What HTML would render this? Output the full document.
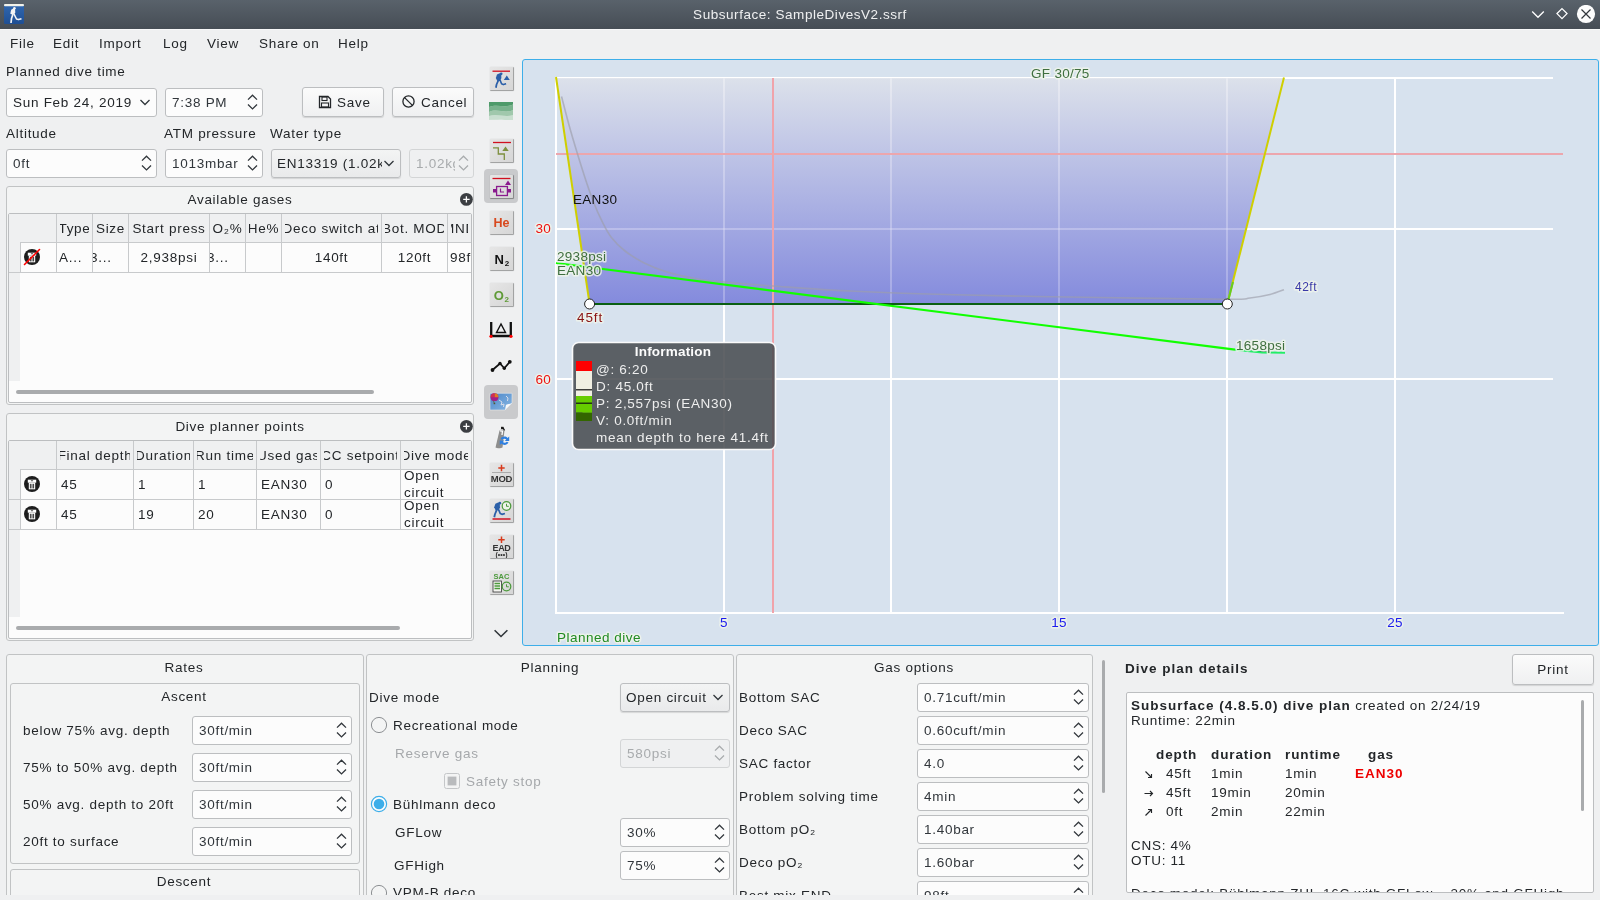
<!DOCTYPE html><html><head><meta charset="utf-8"><style>
html,body{-webkit-font-smoothing:antialiased;margin:0;padding:0;width:1600px;height:900px;overflow:hidden;background:#eff0f1;font-family:"Liberation Sans", sans-serif;}
</style></head><body><div style="position:absolute;left:0;top:0;width:1600px;height:900px;will-change:transform;">
<div style="position:absolute;left:0px;top:0px;width:1600px;height:29px;background:linear-gradient(#59626b,#464d55);"></div>
<div style="position:absolute;left:0px;top:29px;width:1600px;height:1px;background:#f7f8f8;"></div>
<svg style="position:absolute;left:4px;top:4px;" width="20" height="20" viewBox="0 0 20 20"><defs><linearGradient id="ic" x1="0" y1="0" x2="0" y2="1"><stop offset="0" stop-color="#3168b0"/><stop offset="1" stop-color="#1f4f94"/></linearGradient></defs><rect x="0" y="0" width="20" height="20" rx="1.5" fill="url(#ic)"/><rect x="0" y="0" width="20" height="2.2" rx="1" fill="#f2f2ea"/><path d="M6.3 9.5 L7.2 5.8 L9.5 4.2 L11 4.6 L11.3 8.5 L10.2 10.5 L7 10.3 Z" fill="#f4f4f4"/><circle cx="10.4" cy="4.3" r="1.3" fill="#f4f4f4"/><path d="M9 10 L7.5 14.5 L7 19" stroke="#f4f4f4" stroke-width="1.7" fill="none" stroke-linejoin="round"/><path d="M10 10 L12.5 15 L14.5 15.6 L17.5 14.8" stroke="#f4f4f4" stroke-width="1.6" fill="none" stroke-linejoin="round"/></svg>
<div style="position:absolute;left:300px;width:1000px;text-align:center;top:7.32px;line-height:16.20px;font-size:13.5px;color:#eff0f1;font-weight:normal;letter-spacing:0.55px;white-space:nowrap;">Subsurface: SampleDivesV2.ssrf</div>
<svg style="position:absolute;left:1529px;top:5px;" width="18" height="18" viewBox="0 0 18 18"><path d="M3.2 6.5 L9 12.3 L14.8 6.5" fill="none" stroke="#fff" stroke-width="1.3"/></svg>
<svg style="position:absolute;left:1553px;top:5px;" width="18" height="18" viewBox="0 0 18 18"><path d="M9 3.6 L14 8.6 L9 13.6 L4 8.6 Z" fill="none" stroke="#fff" stroke-width="1.3"/></svg>
<svg style="position:absolute;left:1576px;top:5px;" width="20" height="20" viewBox="0 0 20 20"><circle cx="10" cy="9" r="9.1" fill="#fcfcfc"/><path d="M5.5 4.5 L14.5 13.5 M14.5 4.5 L5.5 13.5" stroke="#31363b" stroke-width="1.2"/></svg>
<div style="position:absolute;left:10px;top:36.02px;line-height:16.20px;font-size:13.5px;color:#232629;font-weight:normal;letter-spacing:0.72px;white-space:nowrap;">File</div>
<div style="position:absolute;left:53px;top:36.02px;line-height:16.20px;font-size:13.5px;color:#232629;font-weight:normal;letter-spacing:0.72px;white-space:nowrap;">Edit</div>
<div style="position:absolute;left:99px;top:36.02px;line-height:16.20px;font-size:13.5px;color:#232629;font-weight:normal;letter-spacing:0.72px;white-space:nowrap;">Import</div>
<div style="position:absolute;left:163px;top:36.02px;line-height:16.20px;font-size:13.5px;color:#232629;font-weight:normal;letter-spacing:0.72px;white-space:nowrap;">Log</div>
<div style="position:absolute;left:207px;top:36.02px;line-height:16.20px;font-size:13.5px;color:#232629;font-weight:normal;letter-spacing:0.72px;white-space:nowrap;">View</div>
<div style="position:absolute;left:259px;top:36.02px;line-height:16.20px;font-size:13.5px;color:#232629;font-weight:normal;letter-spacing:0.72px;white-space:nowrap;">Share on</div>
<div style="position:absolute;left:338px;top:36.02px;line-height:16.20px;font-size:13.5px;color:#232629;font-weight:normal;letter-spacing:0.72px;white-space:nowrap;">Help</div>
<div style="position:absolute;left:6px;top:64.02px;line-height:16.20px;font-size:13.5px;color:#232629;font-weight:normal;letter-spacing:0.72px;white-space:nowrap;">Planned dive time</div>
<div style="position:absolute;left:6px;top:88px;width:151px;height:29px;box-sizing:border-box;border:1px solid #bcbec0;border-radius:3px;background:#fcfcfc;"></div>
<svg style="position:absolute;left:139px;top:97px;" width="12" height="10" viewBox="0 0 12 10"><path d="M1.5 3 L6 7.5 L10.5 3" fill="none" stroke="#31363b" stroke-width="1.3"/></svg>
<div style="position:absolute;left:6px;top:88px;width:132px;height:29px;overflow:hidden;">
<div style="position:absolute;left:7px;top:7.32px;line-height:16.20px;font-size:13.5px;color:#232629;font-weight:normal;letter-spacing:0.72px;white-space:nowrap;">Sun Feb 24, 2019</div>
</div>
<div style="position:absolute;left:165px;top:88px;width:98px;height:29px;box-sizing:border-box;border:1px solid #bcbec0;border-radius:3px;background:#fcfcfc;"></div>
<svg style="position:absolute;left:247px;top:93px;" width="11" height="18" viewBox="0 0 11 18"><path d="M1 6.6 L5.5 2.2 L10 6.6 M1 11.5 L5.5 15.9 L10 11.5" fill="none" stroke="#31363b" stroke-width="1.3"/></svg>
<div style="position:absolute;left:172px;top:95.32px;line-height:16.20px;font-size:13.5px;color:#31363b;font-weight:normal;letter-spacing:0.72px;white-space:nowrap;">7:38 PM</div>
<div style="position:absolute;left:302px;top:87px;width:82px;height:30px;box-sizing:border-box;border:1px solid #bcbec0;border-radius:3px;background:linear-gradient(#fbfbfb,#eff0f1);box-shadow:0 1px 1px rgba(0,0,0,0.12);"></div>
<svg style="position:absolute;left:318px;top:95px;" width="14" height="14" viewBox="0 0 14 14"><path d="M1.5 1.5 H10 L12.5 4 V12.5 H1.5 Z" fill="none" stroke="#232629" stroke-width="1.3"/><rect x="4" y="2" width="5" height="3.5" fill="none" stroke="#232629" stroke-width="1.1"/><rect x="3.5" y="8" width="7" height="4" fill="none" stroke="#232629" stroke-width="1.1"/></svg>
<div style="position:absolute;left:337px;top:95.02px;line-height:16.20px;font-size:13.5px;color:#232629;font-weight:normal;letter-spacing:0.72px;white-space:nowrap;">Save</div>
<div style="position:absolute;left:392px;top:87px;width:82px;height:30px;box-sizing:border-box;border:1px solid #bcbec0;border-radius:3px;background:linear-gradient(#fbfbfb,#eff0f1);box-shadow:0 1px 1px rgba(0,0,0,0.12);"></div>
<svg style="position:absolute;left:401px;top:94px;" width="15" height="15" viewBox="0 0 15 15"><circle cx="7.5" cy="7.5" r="5.6" fill="none" stroke="#232629" stroke-width="1.3"/><path d="M3.6 3.6 L11.4 11.4" stroke="#232629" stroke-width="1.3"/></svg>
<div style="position:absolute;left:421px;top:95.02px;line-height:16.20px;font-size:13.5px;color:#232629;font-weight:normal;letter-spacing:0.72px;white-space:nowrap;">Cancel</div>
<div style="position:absolute;left:6px;top:126.02px;line-height:16.20px;font-size:13.5px;color:#232629;font-weight:normal;letter-spacing:0.72px;white-space:nowrap;">Altitude</div>
<div style="position:absolute;left:164px;top:126.02px;line-height:16.20px;font-size:13.5px;color:#232629;font-weight:normal;letter-spacing:0.72px;white-space:nowrap;">ATM pressure</div>
<div style="position:absolute;left:270px;top:126.02px;line-height:16.20px;font-size:13.5px;color:#232629;font-weight:normal;letter-spacing:0.72px;white-space:nowrap;">Water type</div>
<div style="position:absolute;left:6px;top:149px;width:151px;height:29px;box-sizing:border-box;border:1px solid #bcbec0;border-radius:3px;background:#fcfcfc;"></div>
<svg style="position:absolute;left:141px;top:154px;" width="11" height="18" viewBox="0 0 11 18"><path d="M1 6.6 L5.5 2.2 L10 6.6 M1 11.5 L5.5 15.9 L10 11.5" fill="none" stroke="#31363b" stroke-width="1.3"/></svg>
<div style="position:absolute;left:13px;top:156.32px;line-height:16.20px;font-size:13.5px;color:#31363b;font-weight:normal;letter-spacing:0.72px;white-space:nowrap;">0ft</div>
<div style="position:absolute;left:165px;top:149px;width:98px;height:29px;box-sizing:border-box;border:1px solid #bcbec0;border-radius:3px;background:#fcfcfc;"></div>
<svg style="position:absolute;left:247px;top:154px;" width="11" height="18" viewBox="0 0 11 18"><path d="M1 6.6 L5.5 2.2 L10 6.6 M1 11.5 L5.5 15.9 L10 11.5" fill="none" stroke="#31363b" stroke-width="1.3"/></svg>
<div style="position:absolute;left:172px;top:156.32px;line-height:16.20px;font-size:13.5px;color:#31363b;font-weight:normal;letter-spacing:0.72px;white-space:nowrap;">1013mbar</div>
<div style="position:absolute;left:271px;top:149px;width:130px;height:29px;box-sizing:border-box;border:1px solid #bcbec0;border-radius:3px;background:linear-gradient(#f3f4f4,#e9eaeb);box-shadow:0 1px 1px rgba(0,0,0,0.12);"></div>
<svg style="position:absolute;left:383px;top:158px;" width="12" height="10" viewBox="0 0 12 10"><path d="M1.5 3 L6 7.5 L10.5 3" fill="none" stroke="#31363b" stroke-width="1.3"/></svg>
<div style="position:absolute;left:271px;top:149px;width:111px;height:29px;overflow:hidden;">
<div style="position:absolute;left:6px;top:7.32px;line-height:16.20px;font-size:13.5px;color:#232629;font-weight:normal;letter-spacing:0.72px;white-space:nowrap;">EN13319 (1.02k</div>
</div>
<div style="position:absolute;left:409px;top:149px;width:65px;height:29px;box-sizing:border-box;border:1px solid #d3d5d6;border-radius:3px;background:#eff0f1;"></div>
<svg style="position:absolute;left:458px;top:154px;" width="11" height="18" viewBox="0 0 11 18"><path d="M1 6.6 L5.5 2.2 L10 6.6 M1 11.5 L5.5 15.9 L10 11.5" fill="none" stroke="#a8abad" stroke-width="1.3"/></svg>
<div style="position:absolute;left:416px;top:155px;width:39px;height:18px;overflow:hidden;"><div style="position:absolute;left:0;top:0.5px;line-height:16.2px;font-size:13.5px;color:#a8abad;letter-spacing:0.72px;white-space:nowrap">1.02kg/l</div></div>
<div style="position:absolute;left:6px;top:186px;width:468px;height:219px;box-sizing:border-box;border:1px solid #c1c3c4;border-radius:3px;background:#f3f4f4;"></div>
<div style="position:absolute;left:-260px;width:1000px;text-align:center;top:192.02px;line-height:16.20px;font-size:13.5px;color:#232629;font-weight:normal;letter-spacing:0.72px;white-space:nowrap;">Available gases</div>
<svg style="position:absolute;left:459px;top:192px;" width="15" height="15" viewBox="0 0 15 15"><circle cx="7.4" cy="7.4" r="6.4" fill="#3b3e42"/><path d="M7.4 4.2 V10.6 M4.2 7.4 H10.6" stroke="#fff" stroke-width="1.3"/></svg>
<div style="position:absolute;left:8px;top:213px;width:464px;height:190px;box-sizing:border-box;border:1px solid #bcbec0;border-radius:2px;background:#fcfcfc;"></div>
<div style="position:absolute;left:9px;top:214px;width:11px;height:167px;background:#eff0f1;"></div>
<div style="position:absolute;left:9px;top:214px;width:462px;height:28px;background:#eff0f1;"></div>
<div style="position:absolute;left:20px;top:242px;width:451px;height:1px;background:#c8cacc;"></div>
<div style="position:absolute;left:56px;top:214px;width:1px;height:28px;background:#c8cacc;"></div>
<div style="position:absolute;left:92px;top:214px;width:1px;height:28px;background:#c8cacc;"></div>
<div style="position:absolute;left:128px;top:214px;width:1px;height:28px;background:#c8cacc;"></div>
<div style="position:absolute;left:209px;top:214px;width:1px;height:28px;background:#c8cacc;"></div>
<div style="position:absolute;left:245px;top:214px;width:1px;height:28px;background:#c8cacc;"></div>
<div style="position:absolute;left:281px;top:214px;width:1px;height:28px;background:#c8cacc;"></div>
<div style="position:absolute;left:381px;top:214px;width:1px;height:28px;background:#c8cacc;"></div>
<div style="position:absolute;left:447px;top:214px;width:1px;height:28px;background:#c8cacc;"></div>
<div style="position:absolute;left:9px;top:272px;width:462px;height:1px;background:#c8cacc;"></div>
<div style="position:absolute;left:20px;top:242px;width:1px;height:30px;background:#c8cacc;"></div>
<div style="position:absolute;left:56px;top:242px;width:1px;height:30px;background:#c8cacc;"></div>
<div style="position:absolute;left:92px;top:242px;width:1px;height:30px;background:#c8cacc;"></div>
<div style="position:absolute;left:128px;top:242px;width:1px;height:30px;background:#c8cacc;"></div>
<div style="position:absolute;left:209px;top:242px;width:1px;height:30px;background:#c8cacc;"></div>
<div style="position:absolute;left:245px;top:242px;width:1px;height:30px;background:#c8cacc;"></div>
<div style="position:absolute;left:281px;top:242px;width:1px;height:30px;background:#c8cacc;"></div>
<div style="position:absolute;left:381px;top:242px;width:1px;height:30px;background:#c8cacc;"></div>
<div style="position:absolute;left:447px;top:242px;width:1px;height:30px;background:#c8cacc;"></div>
<div style="position:absolute;left:20px;top:243px;width:1px;height:30px;background:#c8cacc;"></div>
<svg style="position:absolute;left:23px;top:248px;" width="18" height="18" viewBox="0 0 18 18"><circle cx="9" cy="9" r="8" fill="#1d1d1d"/><rect x="4.8" y="4.7" width="8.4" height="3" fill="#fff"/><rect x="7.9" y="5.4" width="2.2" height="0.8" fill="#1d1d1d"/><rect x="5.8" y="7.7" width="6.4" height="6.6" fill="#fff"/><path d="M7.4 8.8 V13.4 M9 8.8 V13.4 M10.6 8.8 V13.4" stroke="#1d1d1d" stroke-width="0.9"/><path d="M1.5 16.5 L16.5 1.5" stroke="#ff0000" stroke-width="1.6" stroke-linecap="round"/></svg>
<div style="position:absolute;left:57px;top:243px;width:35px;height:29px;overflow:hidden;"><div style="position:absolute;left:2px;top:6.5px;line-height:16.2px;font-size:13.5px;color:#232629;letter-spacing:0.72px;white-space:nowrap">A...</div></div>
<div style="position:absolute;left:93px;top:243px;width:35px;height:29px;overflow:hidden;"><div style="position:absolute;left:-3px;top:6.5px;line-height:16.2px;font-size:13.5px;color:#232629;letter-spacing:0.72px;white-space:nowrap">3...</div></div>
<div style="position:absolute;left:129px;top:243px;width:80px;height:29px;overflow:hidden;"><div style="position:absolute;left:-200px;right:-200px;text-align:center;top:6.5px;line-height:16.2px;font-size:13.5px;color:#232629;letter-spacing:0.72px;white-space:nowrap">2,938psi</div></div>
<div style="position:absolute;left:210px;top:243px;width:35px;height:29px;overflow:hidden;"><div style="position:absolute;left:-3px;top:6.5px;line-height:16.2px;font-size:13.5px;color:#232629;letter-spacing:0.72px;white-space:nowrap">3...</div></div>
<div style="position:absolute;left:246px;top:243px;width:35px;height:29px;overflow:hidden;"><div style="position:absolute;left:-200px;right:-200px;text-align:center;top:6.5px;line-height:16.2px;font-size:13.5px;color:#232629;letter-spacing:0.72px;white-space:nowrap"></div></div>
<div style="position:absolute;left:282px;top:243px;width:99px;height:29px;overflow:hidden;"><div style="position:absolute;left:-200px;right:-200px;text-align:center;top:6.5px;line-height:16.2px;font-size:13.5px;color:#232629;letter-spacing:0.72px;white-space:nowrap">140ft</div></div>
<div style="position:absolute;left:382px;top:243px;width:65px;height:29px;overflow:hidden;"><div style="position:absolute;left:-200px;right:-200px;text-align:center;top:6.5px;line-height:16.2px;font-size:13.5px;color:#232629;letter-spacing:0.72px;white-space:nowrap">120ft</div></div>
<div style="position:absolute;left:448px;top:243px;width:23px;height:29px;overflow:hidden;"><div style="position:absolute;left:2px;top:6.5px;line-height:16.2px;font-size:13.5px;color:#232629;letter-spacing:0.72px;white-space:nowrap">98ft</div></div>
<div style="position:absolute;left:24px;top:214px;width:29px;height:28px;overflow:hidden;"><div style="position:absolute;left:-200px;right:-200px;text-align:center;top:6.8px;line-height:16.2px;font-size:13.5px;color:#232629;letter-spacing:0.72px;white-space:nowrap"></div></div>
<div style="position:absolute;left:60px;top:214px;width:29px;height:28px;overflow:hidden;"><div style="position:absolute;left:-200px;right:-200px;text-align:center;top:6.8px;line-height:16.2px;font-size:13.5px;color:#232629;letter-spacing:0.72px;white-space:nowrap">Type</div></div>
<div style="position:absolute;left:96px;top:214px;width:29px;height:28px;overflow:hidden;"><div style="position:absolute;left:-200px;right:-200px;text-align:center;top:6.8px;line-height:16.2px;font-size:13.5px;color:#232629;letter-spacing:0.72px;white-space:nowrap">Size</div></div>
<div style="position:absolute;left:132px;top:214px;width:74px;height:28px;overflow:hidden;"><div style="position:absolute;left:-200px;right:-200px;text-align:center;top:6.8px;line-height:16.2px;font-size:13.5px;color:#232629;letter-spacing:0.72px;white-space:nowrap">Start press</div></div>
<div style="position:absolute;left:213px;top:214px;width:29px;height:28px;overflow:hidden;"><div style="position:absolute;left:-200px;right:-200px;text-align:center;top:6.8px;line-height:16.2px;font-size:13.5px;color:#232629;letter-spacing:0.72px;white-space:nowrap">O₂%</div></div>
<div style="position:absolute;left:249px;top:214px;width:29px;height:28px;overflow:hidden;"><div style="position:absolute;left:-200px;right:-200px;text-align:center;top:6.8px;line-height:16.2px;font-size:13.5px;color:#232629;letter-spacing:0.72px;white-space:nowrap">He%</div></div>
<div style="position:absolute;left:285px;top:214px;width:93px;height:28px;overflow:hidden;"><div style="position:absolute;left:-200px;right:-200px;text-align:center;top:6.8px;line-height:16.2px;font-size:13.5px;color:#232629;letter-spacing:0.72px;white-space:nowrap">Deco switch at</div></div>
<div style="position:absolute;left:385px;top:214px;width:59px;height:28px;overflow:hidden;"><div style="position:absolute;left:-200px;right:-200px;text-align:center;top:6.8px;line-height:16.2px;font-size:13.5px;color:#232629;letter-spacing:0.72px;white-space:nowrap">Bot. MOD</div></div>
<div style="position:absolute;left:451px;top:214px;width:17px;height:28px;overflow:hidden;"><div style="position:absolute;left:-200px;right:-200px;text-align:center;top:6.8px;line-height:16.2px;font-size:13.5px;color:#232629;letter-spacing:0.72px;white-space:nowrap">MND</div></div>
<div style="position:absolute;left:16px;top:389.5px;width:358px;height:4px;background:#a9abad;border-radius:2px;"></div>
<div style="position:absolute;left:6px;top:413px;width:468px;height:228px;box-sizing:border-box;border:1px solid #c1c3c4;border-radius:3px;background:#f3f4f4;"></div>
<div style="position:absolute;left:-260px;width:1000px;text-align:center;top:419.02px;line-height:16.20px;font-size:13.5px;color:#232629;font-weight:normal;letter-spacing:0.72px;white-space:nowrap;">Dive planner points</div>
<svg style="position:absolute;left:459px;top:419px;" width="15" height="15" viewBox="0 0 15 15"><circle cx="7.4" cy="7.4" r="6.4" fill="#3b3e42"/><path d="M7.4 4.2 V10.6 M4.2 7.4 H10.6" stroke="#fff" stroke-width="1.3"/></svg>
<div style="position:absolute;left:8px;top:440px;width:464px;height:199px;box-sizing:border-box;border:1px solid #bcbec0;border-radius:2px;background:#fcfcfc;"></div>
<div style="position:absolute;left:9px;top:441px;width:11px;height:176px;background:#eff0f1;"></div>
<div style="position:absolute;left:9px;top:441px;width:462px;height:28px;background:#eff0f1;"></div>
<div style="position:absolute;left:20px;top:469px;width:451px;height:1px;background:#c8cacc;"></div>
<div style="position:absolute;left:56px;top:441px;width:1px;height:28px;background:#c8cacc;"></div>
<div style="position:absolute;left:133px;top:441px;width:1px;height:28px;background:#c8cacc;"></div>
<div style="position:absolute;left:193px;top:441px;width:1px;height:28px;background:#c8cacc;"></div>
<div style="position:absolute;left:256px;top:441px;width:1px;height:28px;background:#c8cacc;"></div>
<div style="position:absolute;left:320px;top:441px;width:1px;height:28px;background:#c8cacc;"></div>
<div style="position:absolute;left:400px;top:441px;width:1px;height:28px;background:#c8cacc;"></div>
<div style="position:absolute;left:9px;top:499px;width:462px;height:1px;background:#c8cacc;"></div>
<div style="position:absolute;left:20px;top:469px;width:1px;height:30px;background:#c8cacc;"></div>
<div style="position:absolute;left:56px;top:469px;width:1px;height:30px;background:#c8cacc;"></div>
<div style="position:absolute;left:133px;top:469px;width:1px;height:30px;background:#c8cacc;"></div>
<div style="position:absolute;left:193px;top:469px;width:1px;height:30px;background:#c8cacc;"></div>
<div style="position:absolute;left:256px;top:469px;width:1px;height:30px;background:#c8cacc;"></div>
<div style="position:absolute;left:320px;top:469px;width:1px;height:30px;background:#c8cacc;"></div>
<div style="position:absolute;left:400px;top:469px;width:1px;height:30px;background:#c8cacc;"></div>
<div style="position:absolute;left:20px;top:470px;width:1px;height:30px;background:#c8cacc;"></div>
<svg style="position:absolute;left:23px;top:475px;" width="18" height="18" viewBox="0 0 18 18"><circle cx="9" cy="9" r="8" fill="#1d1d1d"/><rect x="4.8" y="4.7" width="8.4" height="3" fill="#fff"/><rect x="7.9" y="5.4" width="2.2" height="0.8" fill="#1d1d1d"/><rect x="5.8" y="7.7" width="6.4" height="6.6" fill="#fff"/><path d="M7.4 8.8 V13.4 M9 8.8 V13.4 M10.6 8.8 V13.4" stroke="#1d1d1d" stroke-width="0.9"/></svg>
<div style="position:absolute;left:57px;top:470px;width:76px;height:29px;overflow:hidden;"><div style="position:absolute;left:4px;top:6.5px;line-height:16.2px;font-size:13.5px;color:#232629;letter-spacing:0.72px;white-space:nowrap">45</div></div>
<div style="position:absolute;left:134px;top:470px;width:59px;height:29px;overflow:hidden;"><div style="position:absolute;left:4px;top:6.5px;line-height:16.2px;font-size:13.5px;color:#232629;letter-spacing:0.72px;white-space:nowrap">1</div></div>
<div style="position:absolute;left:194px;top:470px;width:62px;height:29px;overflow:hidden;"><div style="position:absolute;left:4px;top:6.5px;line-height:16.2px;font-size:13.5px;color:#232629;letter-spacing:0.72px;white-space:nowrap">1</div></div>
<div style="position:absolute;left:257px;top:470px;width:63px;height:29px;overflow:hidden;"><div style="position:absolute;left:4px;top:6.5px;line-height:16.2px;font-size:13.5px;color:#232629;letter-spacing:0.72px;white-space:nowrap">EAN30</div></div>
<div style="position:absolute;left:321px;top:470px;width:79px;height:29px;overflow:hidden;"><div style="position:absolute;left:4px;top:6.5px;line-height:16.2px;font-size:13.5px;color:#232629;letter-spacing:0.72px;white-space:nowrap">0</div></div>
<div style="position:absolute;left:401px;top:470px;width:70px;height:29px;overflow:hidden;"><div style="position:absolute;left:3px;top:-2px;line-height:16.5px;font-size:13.5px;color:#232629;letter-spacing:0.72px;white-space:normal;width:60px">Open circuit</div></div>
<div style="position:absolute;left:9px;top:529px;width:462px;height:1px;background:#c8cacc;"></div>
<div style="position:absolute;left:20px;top:499px;width:1px;height:30px;background:#c8cacc;"></div>
<div style="position:absolute;left:56px;top:499px;width:1px;height:30px;background:#c8cacc;"></div>
<div style="position:absolute;left:133px;top:499px;width:1px;height:30px;background:#c8cacc;"></div>
<div style="position:absolute;left:193px;top:499px;width:1px;height:30px;background:#c8cacc;"></div>
<div style="position:absolute;left:256px;top:499px;width:1px;height:30px;background:#c8cacc;"></div>
<div style="position:absolute;left:320px;top:499px;width:1px;height:30px;background:#c8cacc;"></div>
<div style="position:absolute;left:400px;top:499px;width:1px;height:30px;background:#c8cacc;"></div>
<div style="position:absolute;left:20px;top:500px;width:1px;height:30px;background:#c8cacc;"></div>
<svg style="position:absolute;left:23px;top:505px;" width="18" height="18" viewBox="0 0 18 18"><circle cx="9" cy="9" r="8" fill="#1d1d1d"/><rect x="4.8" y="4.7" width="8.4" height="3" fill="#fff"/><rect x="7.9" y="5.4" width="2.2" height="0.8" fill="#1d1d1d"/><rect x="5.8" y="7.7" width="6.4" height="6.6" fill="#fff"/><path d="M7.4 8.8 V13.4 M9 8.8 V13.4 M10.6 8.8 V13.4" stroke="#1d1d1d" stroke-width="0.9"/></svg>
<div style="position:absolute;left:57px;top:500px;width:76px;height:29px;overflow:hidden;"><div style="position:absolute;left:4px;top:6.5px;line-height:16.2px;font-size:13.5px;color:#232629;letter-spacing:0.72px;white-space:nowrap">45</div></div>
<div style="position:absolute;left:134px;top:500px;width:59px;height:29px;overflow:hidden;"><div style="position:absolute;left:4px;top:6.5px;line-height:16.2px;font-size:13.5px;color:#232629;letter-spacing:0.72px;white-space:nowrap">19</div></div>
<div style="position:absolute;left:194px;top:500px;width:62px;height:29px;overflow:hidden;"><div style="position:absolute;left:4px;top:6.5px;line-height:16.2px;font-size:13.5px;color:#232629;letter-spacing:0.72px;white-space:nowrap">20</div></div>
<div style="position:absolute;left:257px;top:500px;width:63px;height:29px;overflow:hidden;"><div style="position:absolute;left:4px;top:6.5px;line-height:16.2px;font-size:13.5px;color:#232629;letter-spacing:0.72px;white-space:nowrap">EAN30</div></div>
<div style="position:absolute;left:321px;top:500px;width:79px;height:29px;overflow:hidden;"><div style="position:absolute;left:4px;top:6.5px;line-height:16.2px;font-size:13.5px;color:#232629;letter-spacing:0.72px;white-space:nowrap">0</div></div>
<div style="position:absolute;left:401px;top:500px;width:70px;height:29px;overflow:hidden;"><div style="position:absolute;left:3px;top:-2px;line-height:16.5px;font-size:13.5px;color:#232629;letter-spacing:0.72px;white-space:normal;width:60px">Open circuit</div></div>
<div style="position:absolute;left:24px;top:441px;width:29px;height:28px;overflow:hidden;"><div style="position:absolute;left:-200px;right:-200px;text-align:center;top:6.8px;line-height:16.2px;font-size:13.5px;color:#232629;letter-spacing:0.72px;white-space:nowrap"></div></div>
<div style="position:absolute;left:60px;top:441px;width:70px;height:28px;overflow:hidden;"><div style="position:absolute;left:-200px;right:-200px;text-align:center;top:6.8px;line-height:16.2px;font-size:13.5px;color:#232629;letter-spacing:0.72px;white-space:nowrap">Final depth</div></div>
<div style="position:absolute;left:137px;top:441px;width:53px;height:28px;overflow:hidden;"><div style="position:absolute;left:-200px;right:-200px;text-align:center;top:6.8px;line-height:16.2px;font-size:13.5px;color:#232629;letter-spacing:0.72px;white-space:nowrap">Duration</div></div>
<div style="position:absolute;left:197px;top:441px;width:56px;height:28px;overflow:hidden;"><div style="position:absolute;left:-200px;right:-200px;text-align:center;top:6.8px;line-height:16.2px;font-size:13.5px;color:#232629;letter-spacing:0.72px;white-space:nowrap">Run time</div></div>
<div style="position:absolute;left:260px;top:441px;width:57px;height:28px;overflow:hidden;"><div style="position:absolute;left:-200px;right:-200px;text-align:center;top:6.8px;line-height:16.2px;font-size:13.5px;color:#232629;letter-spacing:0.72px;white-space:nowrap">Used gas</div></div>
<div style="position:absolute;left:324px;top:441px;width:73px;height:28px;overflow:hidden;"><div style="position:absolute;left:-200px;right:-200px;text-align:center;top:6.8px;line-height:16.2px;font-size:13.5px;color:#232629;letter-spacing:0.72px;white-space:nowrap">CC setpoint</div></div>
<div style="position:absolute;left:404px;top:441px;width:64px;height:28px;overflow:hidden;"><div style="position:absolute;left:-200px;right:-200px;text-align:center;top:6.8px;line-height:16.2px;font-size:13.5px;color:#232629;letter-spacing:0.72px;white-space:nowrap">Dive mode</div></div>
<div style="position:absolute;left:16px;top:625.5px;width:384px;height:4px;background:#a9abad;border-radius:2px;"></div>
<div style="position:absolute;left:490px;top:67px;width:23px;height:23px;background:linear-gradient(135deg,#e6e6e6,#d6d6d6);border-radius:1px;box-shadow:0.6px 0.6px 0.8px rgba(0,0,0,0.35);"></div>
<svg style="position:absolute;left:490px;top:67px;" width="23" height="23" viewBox="0 0 23 23"><path d="M2.5 4.2 H20" stroke="#d01020" stroke-width="1.3"/><path d="M16.8 8.5 L19.8 13 H13.8 Z" fill="#2b5fa8"/><g transform="translate(1,3) scale(0.88)"><path d="M5.5 9 L6.8 5.2 L9.8 3.6 L11.6 4.6 L11.8 9.2 L10.4 12.4 L7.2 12.4 Z" fill="#2b5fa8"/><circle cx="11.6" cy="4.4" r="1.5" fill="#2b5fa8"/><path d="M8.2 12 L6.3 16.5 L5.6 20.2" stroke="#2b5fa8" stroke-width="2" fill="none" stroke-linejoin="round"/><path d="M10.3 11.5 L12 15.6 L14 16.6 L17.2 15.6" stroke="#2b5fa8" stroke-width="1.8" fill="none" stroke-linejoin="round"/></g></svg>
<svg style="position:absolute;left:489px;top:102px;" width="24" height="18" viewBox="0 0 24 18"><defs><linearGradient id="gw" x1="0" y1="0" x2="0" y2="1"><stop offset="0" stop-color="#4e9a6a"/><stop offset="1" stop-color="#d6e6dc"/></linearGradient></defs><path d="M0 0 H24 V18 C16 15 8 19 0 17 Z" fill="#b9d6c2"/><path d="M0 0 H24 V2.5 C16 6.5 8 1.5 0 5 Z" fill="#4e9a6a"/><path d="M0 5 C8 1.5 16 6.5 24 2.5 V8 C16 12 8 6 0 10 Z" fill="#79b28d"/><path d="M0 10 C8 6 16 12 24 8 V13 C16 16 8 11 0 14 Z" fill="#a0c8ac"/><path d="M0 14 C8 11 16 16 24 13 V18 C16 19 8 16 0 18 Z" fill="#c9dfd0"/></svg>
<div style="position:absolute;left:490px;top:139px;width:23px;height:23px;background:linear-gradient(135deg,#e6e6e6,#d6d6d6);border-radius:1px;box-shadow:0.6px 0.6px 0.8px rgba(0,0,0,0.35);"></div>
<svg style="position:absolute;left:490px;top:139px;" width="23" height="23" viewBox="0 0 23 23"><path d="M3 3.5 H21" stroke="#d01020" stroke-width="1.3"/><path d="M15.5 7.5 L18.7 12 H12.3 Z" fill="#7d8f3e"/><path d="M3 8.8 H8.3 V15 H14.3 V21" fill="none" stroke="#7d8f3e" stroke-width="1.3"/></svg>
<div style="position:absolute;left:484px;top:169px;width:34px;height:34px;background:#c9cacc;border-radius:4px;"></div>
<div style="position:absolute;left:490px;top:175px;width:23px;height:23px;background:linear-gradient(135deg,#e6e6e6,#d6d6d6);border-radius:1px;box-shadow:0.6px 0.6px 0.8px rgba(0,0,0,0.35);"></div>
<svg style="position:absolute;left:490px;top:175px;" width="23" height="23" viewBox="0 0 23 23"><path d="M2.5 3.5 H20.5" stroke="#d01020" stroke-width="1.3"/><path d="M18 5.5 L21 10 H15 Z" fill="#8a1a8e"/><rect x="3" y="14" width="3" height="3.5" fill="#8a1a8e"/><rect x="18" y="14" width="3" height="3.5" fill="#8a1a8e"/><rect x="6.6" y="11.5" width="10.8" height="9" fill="none" stroke="#8a1a8e" stroke-width="1.3"/><path d="M10.5 13.5 V17 H14" fill="none" stroke="#8a1a8e" stroke-width="1.2"/></svg>
<div style="position:absolute;left:490px;top:211px;width:23px;height:23px;background:linear-gradient(135deg,#e6e6e6,#d6d6d6);border-radius:1px;box-shadow:0.6px 0.6px 0.8px rgba(0,0,0,0.35);"></div>
<svg style="position:absolute;left:490px;top:211px;" width="23" height="23" viewBox="0 0 23 23"><text x="11.5" y="16" text-anchor="middle" font-family="Liberation Sans" font-weight="bold" font-size="12.5" fill="#d8481d">He</text></svg>
<div style="position:absolute;left:490px;top:247px;width:23px;height:23px;background:linear-gradient(135deg,#e6e6e6,#d6d6d6);border-radius:1px;box-shadow:0.6px 0.6px 0.8px rgba(0,0,0,0.35);"></div>
<svg style="position:absolute;left:490px;top:247px;" width="23" height="23" viewBox="0 0 23 23"><text x="4.5" y="17" font-family="Liberation Sans" font-weight="bold" font-size="13" fill="#111">N</text><text x="14.8" y="18.5" font-family="Liberation Sans" font-weight="bold" font-size="8" fill="#111">2</text></svg>
<div style="position:absolute;left:490px;top:283px;width:23px;height:23px;background:linear-gradient(135deg,#e6e6e6,#d6d6d6);border-radius:1px;box-shadow:0.6px 0.6px 0.8px rgba(0,0,0,0.35);"></div>
<svg style="position:absolute;left:490px;top:283px;" width="23" height="23" viewBox="0 0 23 23"><text x="3.8" y="17" font-family="Liberation Sans" font-weight="bold" font-size="13" fill="#5f9a36">O</text><text x="14.5" y="18.5" font-family="Liberation Sans" font-weight="bold" font-size="8" fill="#5f9a36">2</text></svg>
<svg style="position:absolute;left:489px;top:321px;" width="24" height="18" viewBox="0 0 24 18"><path d="M2.2 1 V16 M21.8 1 V16 M2 15 H22" stroke="#111" stroke-width="2.3" fill="none"/><path d="M12 3 L7.5 11.5 H16.5 Z" fill="none" stroke="#111" stroke-width="1.4"/><circle cx="2" cy="15.3" r="1.6" fill="#f00"/><circle cx="22" cy="15.3" r="1.6" fill="#f00"/></svg>
<svg style="position:absolute;left:489px;top:358px;" width="24" height="16" viewBox="0 0 24 16"><path d="M3.5 12 L11 5.5 L15.3 10.3 L20.8 3.8" stroke="#111" stroke-width="1.7" fill="none"/><circle cx="3.5" cy="12" r="1.9" fill="#111"/><circle cx="11" cy="5.5" r="1.7" fill="#111"/><circle cx="15.3" cy="10.3" r="1.7" fill="#111"/><circle cx="20.8" cy="3.8" r="1.9" fill="#111"/></svg>
<div style="position:absolute;left:484px;top:385px;width:34px;height:34px;background:#c9cacc;border-radius:4px;"></div>
<svg style="position:absolute;left:489px;top:392px;" width="24" height="20" viewBox="0 0 24 20"><defs><linearGradient id="mp" x1="0" y1="0" x2="1" y2="1"><stop offset="0" stop-color="#4a86c8"/><stop offset="1" stop-color="#8ab8e4"/></linearGradient></defs><path d="M1 1.3 H23 V11 L16 18 H1 Z" fill="url(#mp)" stroke="#e8e8e8" stroke-width="0.6"/><path d="M16 18 L23 11 C21 12 18 12 17 13 C16.5 14.5 16.5 16 16 18 Z" fill="#fafafa"/><circle cx="5.5" cy="5.2" r="3.9" fill="#a0208a"/><path d="M5.5 1.3 A3.9 3.9 0 0 1 9.4 5.2 H5.5 Z" fill="#e07a20"/><path d="M1.6 5.2 A3.9 3.9 0 0 1 5.5 1.3 V5.2 Z" fill="#d03050"/><path d="M4.5 8.8 L5.2 11" stroke="#664" stroke-width="0.9"/><rect x="4.6" y="10.8" width="1.6" height="1.4" fill="#553"/><path d="M10 8 L13 10 L12 13 L15 12 L14.5 15 M17 4 L19 6 L18.5 9" stroke="#d8dce8" stroke-width="1" fill="none"/></svg>
<svg style="position:absolute;left:493px;top:426px;" width="18" height="24" viewBox="0 0 18 24"><path d="M8 0.8 H10.5 V3 H8 Z" fill="#222"/><path d="M9.8 1.5 L11.5 4.5" stroke="#111" stroke-width="1.5"/><path d="M6.5 4.5 C7.5 3 10.5 3 11.5 4.5 L9.5 21.5 C8 22.5 4 22.5 2.5 21.5 Z" fill="#8e8e8e"/><path d="M7 4.8 L9.5 5 L9 9" stroke="#fff" stroke-width="1.3" fill="none"/><path d="M7.5 13 C9 10 13 10 14.5 12 L16.2 10.5 L16.2 15 L11.8 15 L13.3 13.6 C12 12.4 10 12.6 9.3 13.8 Z" fill="#2e7fe0"/><path d="M15.5 16.5 C14 19.5 10 19.5 8.5 17.5 L6.8 19 L6.8 14.5 L11.2 14.5 L9.8 16 C11 17.2 13 17 13.7 15.7 Z" fill="#2e7fe0"/></svg>
<div style="position:absolute;left:490px;top:463px;width:23px;height:23px;background:linear-gradient(135deg,#e6e6e6,#d6d6d6);border-radius:1px;box-shadow:0.6px 0.6px 0.8px rgba(0,0,0,0.35);"></div>
<svg style="position:absolute;left:490px;top:463px;" width="23" height="23" viewBox="0 0 23 23"><path d="M11.5 1.8 V8.2 M8.3 5 H14.7" stroke="#d83a1c" stroke-width="1.5"/><path d="M2 9.5 H21" stroke="#888" stroke-width="0.6"/><text x="11.5" y="18.8" text-anchor="middle" font-family="Liberation Sans" font-weight="bold" font-size="9.5" fill="#333" letter-spacing="-0.3">MOD</text></svg>
<div style="position:absolute;left:490px;top:499px;width:23px;height:23px;background:linear-gradient(135deg,#e6e6e6,#d6d6d6);border-radius:1px;box-shadow:0.6px 0.6px 0.8px rgba(0,0,0,0.35);"></div>
<svg style="position:absolute;left:490px;top:499px;" width="23" height="23" viewBox="0 0 23 23"><path d="M2.5 20 H20.5" stroke="#d01020" stroke-width="1.5"/><circle cx="16.5" cy="7" r="4.3" fill="#eef3ea" stroke="#4c9a3c" stroke-width="1.2"/><path d="M16.5 4.8 V7.3 H18.8" stroke="#4c9a3c" stroke-width="1" fill="none"/><g transform="translate(0.5,1) scale(0.92)"><path d="M4 8 L5.3 4.2 L8.3 2.6 L10.1 3.6 L10.3 8.2 L8.9 11.4 L5.7 11.4 Z" fill="#2b5fa8"/><circle cx="10.1" cy="3.4" r="1.5" fill="#2b5fa8"/><path d="M6.7 11 L4.8 15.5 L4.1 18.8" stroke="#2b5fa8" stroke-width="2" fill="none" stroke-linejoin="round"/><path d="M8.8 10.5 L10.5 14.6 L12.5 15.6 L15.7 14.6" stroke="#2b5fa8" stroke-width="1.8" fill="none" stroke-linejoin="round"/></g></svg>
<div style="position:absolute;left:490px;top:535px;width:23px;height:23px;background:linear-gradient(135deg,#e6e6e6,#d6d6d6);border-radius:1px;box-shadow:0.6px 0.6px 0.8px rgba(0,0,0,0.35);"></div>
<svg style="position:absolute;left:490px;top:535px;" width="23" height="23" viewBox="0 0 23 23"><path d="M11.5 1.5 V8 M8.3 4.7 H14.7" stroke="#d83a1c" stroke-width="1.5"/><text x="11.5" y="15.5" text-anchor="middle" font-family="Liberation Sans" font-weight="bold" font-size="9" fill="#333" letter-spacing="-0.3">EAD</text><text x="11.5" y="21.5" text-anchor="middle" font-family="Liberation Sans" font-weight="bold" font-size="7" fill="#333">(•••)</text></svg>
<div style="position:absolute;left:490px;top:571px;width:23px;height:23px;background:linear-gradient(135deg,#e6e6e6,#d6d6d6);border-radius:1px;box-shadow:0.6px 0.6px 0.8px rgba(0,0,0,0.35);"></div>
<svg style="position:absolute;left:490px;top:571px;" width="23" height="23" viewBox="0 0 23 23"><text x="11.5" y="8" text-anchor="middle" font-family="Liberation Sans" font-weight="bold" font-size="7.5" fill="#4c9a3c">SAC</text><rect x="3" y="10" width="8.5" height="11" fill="#f4f4f0" stroke="#333" stroke-width="0.8"/><path d="M4.5 12.5 H10 M4.5 15 H10 M4.5 17.5 H10" stroke="#4c9a3c" stroke-width="1.3"/><circle cx="16.5" cy="15.5" r="4.3" fill="none" stroke="#4c9a3c" stroke-width="1.2"/><path d="M16.5 13.3 V15.8 H18.8" stroke="#4c9a3c" stroke-width="1" fill="none"/></svg>
<svg style="position:absolute;left:493px;top:627px;" width="16" height="12" viewBox="0 0 16 12"><path d="M1.6 3.2 L8 9.5 L14.4 3.2" fill="none" stroke="#31363b" stroke-width="1.6"/></svg>
<svg style="position:absolute;left:0px;top:0px;pointer-events:none;" width="1600" height="900" viewBox="0 0 1600 900"><defs><linearGradient id="dg" gradientUnits="userSpaceOnUse" x1="0" y1="78" x2="0" y2="304"><stop offset="0" stop-color="#dde1ea" stop-opacity="0.85"/><stop offset="1" stop-color="#757bda" stop-opacity="0.85"/></linearGradient></defs><rect x="522.5" y="59.5" width="1076" height="586" rx="2.5" fill="#d7e2ee" stroke="#3daee9" stroke-width="1"/><path d="M555 78 H1553" stroke="#ffffff" stroke-width="2"/><path d="M555 229 H1553" stroke="#ffffff" stroke-width="2"/><path d="M555 379 H1553" stroke="#ffffff" stroke-width="2"/><path d="M555 613 H1564" stroke="#ffffff" stroke-width="2"/><path d="M556 77 V614" stroke="#ffffff" stroke-width="2"/><path d="M724 77 V614" stroke="#ffffff" stroke-width="2"/><path d="M891 77 V614" stroke="#ffffff" stroke-width="2"/><path d="M1059 77 V614" stroke="#ffffff" stroke-width="2"/><path d="M1227 77 V614" stroke="#ffffff" stroke-width="2"/><path d="M1395 77 V614" stroke="#ffffff" stroke-width="2"/><path d="M556 78 L589.6 304 L1227.3 304 L1284 78 Z" fill="url(#dg)"/><path d="M724 78 V304" stroke="#fff" stroke-width="2" opacity="0.22"/><path d="M891 78 V304" stroke="#fff" stroke-width="2" opacity="0.22"/><path d="M1059 78 V304" stroke="#fff" stroke-width="2" opacity="0.22"/><path d="M1227 78 V304" stroke="#fff" stroke-width="2" opacity="0.22"/><path d="M556 229 H1270" stroke="#fff" stroke-width="2" opacity="0.22"/><path d="M773 78 V613" stroke="#f0a3aa" stroke-width="2"/><path d="M556 154 H1563" stroke="#eca6ad" stroke-width="2"/><path d="M561.5 96.5 C562.8 101.2 566.4 115.6 569 125 C571.6 134.4 574.5 144.1 577.2 153 C579.9 161.9 582.6 170.5 585.3 178.7 C588.0 186.9 590.8 195.0 593.5 202 C596.2 209.0 598.8 214.9 601.7 220.7 C604.6 226.5 607.1 231.9 611 237 C614.9 242.1 619.5 246.7 625 251 C630.5 255.3 636.7 259.2 643.7 262.7 C650.7 266.2 658.5 269.4 667 272 C675.5 274.6 687.0 276.9 695 278.5 C703.0 280.1 700.8 280.0 715 281.3 C729.2 282.6 756.7 284.8 780 286.5 C803.3 288.2 825.8 289.9 855 291.3 C884.2 292.7 914.2 293.8 955 294.8 C995.8 295.8 1054.7 296.8 1100 297.5 C1145.3 298.2 1202.0 299.2 1227 299.3 C1252.0 299.4 1242.8 298.8 1250 298 C1257.2 297.2 1264.3 295.9 1270 294.5 C1275.7 293.1 1281.7 290.5 1284 289.7" fill="none" stroke="#9c9eaa" stroke-width="1.6" opacity="0.65"/><path d="M589.6 304 H1227.3" stroke="#0b5e12" stroke-width="2"/><path d="M556 77 L589.6 304" stroke="#cfcf00" stroke-width="2"/><path d="M1227.3 304 L1284 77.5" stroke="#cfcf00" stroke-width="2"/><path d="M1227.3 304 L1233 282" stroke="#66cc22" stroke-width="2"/><path d="M556 263 L1235 349.7" stroke="#11ff00" stroke-width="2.2"/><path d="M1235 349.7 L1262 352.5 L1285 352.8" stroke="#22ee66" stroke-width="2"/><circle cx="589.6" cy="304" r="5" fill="#fff" stroke="#222" stroke-width="1"/><circle cx="1227.3" cy="304" r="5" fill="#fff" stroke="#222" stroke-width="1"/><text x="573" y="204" font-family="Liberation Sans" font-size="13.5" fill="#111" text-anchor="start" letter-spacing="0.3"  >EAN30</text><text x="557" y="261" font-family="Liberation Sans" font-size="13.5" fill="#3f6f3f" text-anchor="start" letter-spacing="0.3" paint-order="stroke" stroke="rgba(240,245,235,0.8)" stroke-width="3" stroke-linejoin="round" >2938psi</text><text x="557" y="275" font-family="Liberation Sans" font-size="13.5" fill="#3f6f3f" text-anchor="start" letter-spacing="0.3" paint-order="stroke" stroke="rgba(240,245,235,0.8)" stroke-width="3" stroke-linejoin="round" >EAN30</text><text x="577" y="322" font-family="Liberation Sans" font-size="13.5" fill="#8a1414" text-anchor="start" letter-spacing="0.9" paint-order="stroke" stroke="rgba(240,245,235,0.8)" stroke-width="3" stroke-linejoin="round" >45ft</text><text x="1295" y="291" font-family="Liberation Sans" font-size="12" fill="#3a3aa8" text-anchor="start" letter-spacing="0.5" paint-order="stroke" stroke="rgba(240,245,235,0.8)" stroke-width="3" stroke-linejoin="round" >42ft</text><text x="1236" y="350" font-family="Liberation Sans" font-size="13.5" fill="#3f6f3f" text-anchor="start" letter-spacing="0.3" paint-order="stroke" stroke="rgba(240,245,235,0.8)" stroke-width="3" stroke-linejoin="round" >1658psi</text><text x="1031" y="78" font-family="Liberation Sans" font-size="13.5" fill="#3f6f3f" text-anchor="start" letter-spacing="0.3" paint-order="stroke" stroke="rgba(240,245,235,0.8)" stroke-width="3" stroke-linejoin="round" >GF 30/75</text><text x="551" y="233" font-family="Liberation Sans" font-size="13.5" fill="#ee1111" text-anchor="end" letter-spacing="0.3" paint-order="stroke" stroke="rgba(240,245,235,0.8)" stroke-width="3" stroke-linejoin="round" >30</text><text x="551" y="384" font-family="Liberation Sans" font-size="13.5" fill="#ee1111" text-anchor="end" letter-spacing="0.3" paint-order="stroke" stroke="rgba(240,245,235,0.8)" stroke-width="3" stroke-linejoin="round" >60</text><text x="724" y="627" font-family="Liberation Sans" font-size="13.5" fill="#1a1aee" text-anchor="middle" letter-spacing="0.3" paint-order="stroke" stroke="rgba(240,245,235,0.8)" stroke-width="3" stroke-linejoin="round" >5</text><text x="1059" y="627" font-family="Liberation Sans" font-size="13.5" fill="#1a1aee" text-anchor="middle" letter-spacing="0.3" paint-order="stroke" stroke="rgba(240,245,235,0.8)" stroke-width="3" stroke-linejoin="round" >15</text><text x="1395" y="627" font-family="Liberation Sans" font-size="13.5" fill="#1a1aee" text-anchor="middle" letter-spacing="0.3" paint-order="stroke" stroke="rgba(240,245,235,0.8)" stroke-width="3" stroke-linejoin="round" >25</text><text x="557" y="642" font-family="Liberation Sans" font-size="13.5" fill="#228b22" text-anchor="start" letter-spacing="0.5" paint-order="stroke" stroke="rgba(240,245,235,0.8)" stroke-width="3" stroke-linejoin="round" >Planned dive</text><rect x="572.5" y="342.5" width="203" height="107" rx="6" fill="rgba(72,76,80,0.87)" stroke="#fafafa" stroke-width="1.6"/><text x="673" y="356" font-family="Liberation Sans" font-size="13.5" font-weight="bold" fill="#fcfcfc" text-anchor="middle" letter-spacing="0.2">Information</text><text x="596" y="374.3" font-family="Liberation Sans" font-size="13.5" fill="#eeeeee" text-anchor="start" letter-spacing="0.72"  >@: 6:20</text><text x="596" y="391.3" font-family="Liberation Sans" font-size="13.5" fill="#eeeeee" text-anchor="start" letter-spacing="0.72"  >D: 45.0ft</text><text x="596" y="408.3" font-family="Liberation Sans" font-size="13.5" fill="#eeeeee" text-anchor="start" letter-spacing="0.72"  >P: 2,557psi (EAN30)</text><text x="596" y="425.3" font-family="Liberation Sans" font-size="13.5" fill="#eeeeee" text-anchor="start" letter-spacing="0.72"  >V: 0.0ft/min</text><text x="596" y="442.3" font-family="Liberation Sans" font-size="13.5" fill="#eeeeee" text-anchor="start" letter-spacing="0.72"  >mean depth to here 41.4ft</text><rect x="576" y="361" width="16" height="10" fill="#ff0000"/><rect x="576" y="371" width="16" height="25" fill="#f0efe2"/><path d="M576 389.8 H592" stroke="#111" stroke-width="1.2"/><rect x="576" y="396" width="16" height="16.5" fill="#66cc00"/><path d="M576 403.2 H592" stroke="#111" stroke-width="1.2"/><path d="M576 412.5 H592 V421 H576 Z" fill="#336600"/><path d="M576 404 H592 V412.5 H585 C580 412.5 577 410 576 407 Z" fill="#66cc00"/></svg>
<div style="position:absolute;left:0;top:0;width:1600px;height:895px;overflow:hidden;">
<div style="position:absolute;left:6px;top:654px;width:358px;height:276px;box-sizing:border-box;border:1px solid #c1c3c4;border-radius:3px;background:#f3f4f4;"></div>
<div style="position:absolute;left:-316px;width:1000px;text-align:center;top:660.02px;line-height:16.20px;font-size:13.5px;color:#232629;font-weight:normal;letter-spacing:0.72px;white-space:nowrap;">Rates</div>
<div style="position:absolute;left:10px;top:683px;width:350px;height:181px;box-sizing:border-box;border:1px solid #c1c3c4;border-radius:3px;background:#f3f4f4;"></div>
<div style="position:absolute;left:-316px;width:1000px;text-align:center;top:689.02px;line-height:16.20px;font-size:13.5px;color:#232629;font-weight:normal;letter-spacing:0.72px;white-space:nowrap;">Ascent</div>
<div style="position:absolute;left:23px;top:723.32px;line-height:16.20px;font-size:13.5px;color:#232629;font-weight:normal;letter-spacing:0.72px;white-space:nowrap;">below 75% avg. depth</div>
<div style="position:absolute;left:192px;top:716px;width:160px;height:29px;box-sizing:border-box;border:1px solid #bcbec0;border-radius:3px;background:#fcfcfc;"></div>
<svg style="position:absolute;left:336px;top:721px;" width="11" height="18" viewBox="0 0 11 18"><path d="M1 6.6 L5.5 2.2 L10 6.6 M1 11.5 L5.5 15.9 L10 11.5" fill="none" stroke="#31363b" stroke-width="1.3"/></svg>
<div style="position:absolute;left:199px;top:723.32px;line-height:16.20px;font-size:13.5px;color:#31363b;font-weight:normal;letter-spacing:0.72px;white-space:nowrap;">30ft/min</div>
<div style="position:absolute;left:23px;top:760.32px;line-height:16.20px;font-size:13.5px;color:#232629;font-weight:normal;letter-spacing:0.72px;white-space:nowrap;">75% to 50% avg. depth</div>
<div style="position:absolute;left:192px;top:753px;width:160px;height:29px;box-sizing:border-box;border:1px solid #bcbec0;border-radius:3px;background:#fcfcfc;"></div>
<svg style="position:absolute;left:336px;top:758px;" width="11" height="18" viewBox="0 0 11 18"><path d="M1 6.6 L5.5 2.2 L10 6.6 M1 11.5 L5.5 15.9 L10 11.5" fill="none" stroke="#31363b" stroke-width="1.3"/></svg>
<div style="position:absolute;left:199px;top:760.32px;line-height:16.20px;font-size:13.5px;color:#31363b;font-weight:normal;letter-spacing:0.72px;white-space:nowrap;">30ft/min</div>
<div style="position:absolute;left:23px;top:797.32px;line-height:16.20px;font-size:13.5px;color:#232629;font-weight:normal;letter-spacing:0.72px;white-space:nowrap;">50% avg. depth to 20ft</div>
<div style="position:absolute;left:192px;top:790px;width:160px;height:29px;box-sizing:border-box;border:1px solid #bcbec0;border-radius:3px;background:#fcfcfc;"></div>
<svg style="position:absolute;left:336px;top:795px;" width="11" height="18" viewBox="0 0 11 18"><path d="M1 6.6 L5.5 2.2 L10 6.6 M1 11.5 L5.5 15.9 L10 11.5" fill="none" stroke="#31363b" stroke-width="1.3"/></svg>
<div style="position:absolute;left:199px;top:797.32px;line-height:16.20px;font-size:13.5px;color:#31363b;font-weight:normal;letter-spacing:0.72px;white-space:nowrap;">30ft/min</div>
<div style="position:absolute;left:23px;top:834.32px;line-height:16.20px;font-size:13.5px;color:#232629;font-weight:normal;letter-spacing:0.72px;white-space:nowrap;">20ft to surface</div>
<div style="position:absolute;left:192px;top:827px;width:160px;height:29px;box-sizing:border-box;border:1px solid #bcbec0;border-radius:3px;background:#fcfcfc;"></div>
<svg style="position:absolute;left:336px;top:832px;" width="11" height="18" viewBox="0 0 11 18"><path d="M1 6.6 L5.5 2.2 L10 6.6 M1 11.5 L5.5 15.9 L10 11.5" fill="none" stroke="#31363b" stroke-width="1.3"/></svg>
<div style="position:absolute;left:199px;top:834.32px;line-height:16.20px;font-size:13.5px;color:#31363b;font-weight:normal;letter-spacing:0.72px;white-space:nowrap;">30ft/min</div>
<div style="position:absolute;left:10px;top:869px;width:350px;height:91px;box-sizing:border-box;border:1px solid #c1c3c4;border-radius:3px;background:#f3f4f4;"></div>
<div style="position:absolute;left:-316px;width:1000px;text-align:center;top:874.02px;line-height:16.20px;font-size:13.5px;color:#232629;font-weight:normal;letter-spacing:0.72px;white-space:nowrap;">Descent</div>
<div style="position:absolute;left:366px;top:654px;width:368px;height:276px;box-sizing:border-box;border:1px solid #c1c3c4;border-radius:3px;background:#f3f4f4;"></div>
<div style="position:absolute;left:50px;width:1000px;text-align:center;top:660.02px;line-height:16.20px;font-size:13.5px;color:#232629;font-weight:normal;letter-spacing:0.72px;white-space:nowrap;">Planning</div>
<div style="position:absolute;left:369px;top:690.02px;line-height:16.20px;font-size:13.5px;color:#232629;font-weight:normal;letter-spacing:0.72px;white-space:nowrap;">Dive mode</div>
<div style="position:absolute;left:620px;top:683px;width:110px;height:29px;box-sizing:border-box;border:1px solid #bcbec0;border-radius:3px;background:linear-gradient(#f3f4f4,#e9eaeb);box-shadow:0 1px 1px rgba(0,0,0,0.12);"></div>
<svg style="position:absolute;left:712px;top:692px;" width="12" height="10" viewBox="0 0 12 10"><path d="M1.5 3 L6 7.5 L10.5 3" fill="none" stroke="#31363b" stroke-width="1.3"/></svg>
<div style="position:absolute;left:620px;top:683px;width:91px;height:29px;overflow:hidden;">
<div style="position:absolute;left:6px;top:7.32px;line-height:16.20px;font-size:13.5px;color:#232629;font-weight:normal;letter-spacing:0.72px;white-space:nowrap;">Open circuit</div>
</div>
<svg style="position:absolute;left:369px;top:715px;" width="20" height="20" viewBox="0 0 20 20"><circle cx="10" cy="10" r="7.6" fill="#f3f4f4" stroke="#8d9093" stroke-width="1"/></svg>
<div style="position:absolute;left:393px;top:718.02px;line-height:16.20px;font-size:13.5px;color:#232629;font-weight:normal;letter-spacing:0.72px;white-space:nowrap;">Recreational mode</div>
<div style="position:absolute;left:395px;top:746.02px;line-height:16.20px;font-size:13.5px;color:#a5a8ab;font-weight:normal;letter-spacing:0.72px;white-space:nowrap;">Reserve gas</div>
<div style="position:absolute;left:620px;top:739px;width:110px;height:29px;box-sizing:border-box;border:1px solid #d3d5d6;border-radius:3px;background:#eff0f1;"></div>
<svg style="position:absolute;left:714px;top:744px;" width="11" height="18" viewBox="0 0 11 18"><path d="M1 6.6 L5.5 2.2 L10 6.6 M1 11.5 L5.5 15.9 L10 11.5" fill="none" stroke="#a8abad" stroke-width="1.3"/></svg>
<div style="position:absolute;left:627px;top:746.32px;line-height:16.20px;font-size:13.5px;color:#a8abad;font-weight:normal;letter-spacing:0.72px;white-space:nowrap;">580psi</div>
<svg style="position:absolute;left:443px;top:772px;" width="18" height="18" viewBox="0 0 18 18"><rect x="1.5" y="1.5" width="15" height="15" rx="2" fill="#f3f4f4" stroke="#c4c6c8"/><rect x="4.6" y="4.6" width="8.8" height="8.8" fill="#b9bbbd"/></svg>
<div style="position:absolute;left:466px;top:774.02px;line-height:16.20px;font-size:13.5px;color:#a5a8ab;font-weight:normal;letter-spacing:0.72px;white-space:nowrap;">Safety stop</div>
<svg style="position:absolute;left:369px;top:794px;" width="20" height="20" viewBox="0 0 20 20"><circle cx="10" cy="10" r="7.6" fill="#fcfcfc" stroke="#3daee9" stroke-width="1.2"/><circle cx="10" cy="10" r="5.3" fill="#3daee9"/></svg>
<div style="position:absolute;left:393px;top:797.02px;line-height:16.20px;font-size:13.5px;color:#232629;font-weight:normal;letter-spacing:0.72px;white-space:nowrap;">Bühlmann deco</div>
<div style="position:absolute;left:395px;top:825.02px;line-height:16.20px;font-size:13.5px;color:#232629;font-weight:normal;letter-spacing:0.72px;white-space:nowrap;">GFLow</div>
<div style="position:absolute;left:620px;top:818px;width:110px;height:29px;box-sizing:border-box;border:1px solid #bcbec0;border-radius:3px;background:#fcfcfc;"></div>
<svg style="position:absolute;left:714px;top:823px;" width="11" height="18" viewBox="0 0 11 18"><path d="M1 6.6 L5.5 2.2 L10 6.6 M1 11.5 L5.5 15.9 L10 11.5" fill="none" stroke="#31363b" stroke-width="1.3"/></svg>
<div style="position:absolute;left:627px;top:825.32px;line-height:16.20px;font-size:13.5px;color:#31363b;font-weight:normal;letter-spacing:0.72px;white-space:nowrap;">30%</div>
<div style="position:absolute;left:394px;top:858.02px;line-height:16.20px;font-size:13.5px;color:#232629;font-weight:normal;letter-spacing:0.72px;white-space:nowrap;">GFHigh</div>
<div style="position:absolute;left:620px;top:851px;width:110px;height:29px;box-sizing:border-box;border:1px solid #bcbec0;border-radius:3px;background:#fcfcfc;"></div>
<svg style="position:absolute;left:714px;top:856px;" width="11" height="18" viewBox="0 0 11 18"><path d="M1 6.6 L5.5 2.2 L10 6.6 M1 11.5 L5.5 15.9 L10 11.5" fill="none" stroke="#31363b" stroke-width="1.3"/></svg>
<div style="position:absolute;left:627px;top:858.32px;line-height:16.20px;font-size:13.5px;color:#31363b;font-weight:normal;letter-spacing:0.72px;white-space:nowrap;">75%</div>
<svg style="position:absolute;left:369px;top:883px;" width="20" height="20" viewBox="0 0 20 20"><circle cx="10" cy="10" r="7.6" fill="#f3f4f4" stroke="#8d9093" stroke-width="1"/></svg>
<div style="position:absolute;left:393px;top:885.02px;line-height:16.20px;font-size:13.5px;color:#232629;font-weight:normal;letter-spacing:0.72px;white-space:nowrap;">VPM-B deco</div>
<div style="position:absolute;left:736px;top:654px;width:357px;height:276px;box-sizing:border-box;border:1px solid #c1c3c4;border-radius:3px;background:#f3f4f4;"></div>
<div style="position:absolute;left:414px;width:1000px;text-align:center;top:660.02px;line-height:16.20px;font-size:13.5px;color:#232629;font-weight:normal;letter-spacing:0.72px;white-space:nowrap;">Gas options</div>
<div style="position:absolute;left:739px;top:689.82px;line-height:16.20px;font-size:13.5px;color:#232629;font-weight:normal;letter-spacing:0.72px;white-space:nowrap;">Bottom SAC</div>
<div style="position:absolute;left:917px;top:683px;width:172px;height:29px;box-sizing:border-box;border:1px solid #bcbec0;border-radius:3px;background:#fcfcfc;"></div>
<svg style="position:absolute;left:1073px;top:688px;" width="11" height="18" viewBox="0 0 11 18"><path d="M1 6.6 L5.5 2.2 L10 6.6 M1 11.5 L5.5 15.9 L10 11.5" fill="none" stroke="#31363b" stroke-width="1.3"/></svg>
<div style="position:absolute;left:924px;top:690.32px;line-height:16.20px;font-size:13.5px;color:#31363b;font-weight:normal;letter-spacing:0.72px;white-space:nowrap;">0.71cuft/min</div>
<div style="position:absolute;left:739px;top:722.82px;line-height:16.20px;font-size:13.5px;color:#232629;font-weight:normal;letter-spacing:0.72px;white-space:nowrap;">Deco SAC</div>
<div style="position:absolute;left:917px;top:716px;width:172px;height:29px;box-sizing:border-box;border:1px solid #bcbec0;border-radius:3px;background:#fcfcfc;"></div>
<svg style="position:absolute;left:1073px;top:721px;" width="11" height="18" viewBox="0 0 11 18"><path d="M1 6.6 L5.5 2.2 L10 6.6 M1 11.5 L5.5 15.9 L10 11.5" fill="none" stroke="#31363b" stroke-width="1.3"/></svg>
<div style="position:absolute;left:924px;top:723.32px;line-height:16.20px;font-size:13.5px;color:#31363b;font-weight:normal;letter-spacing:0.72px;white-space:nowrap;">0.60cuft/min</div>
<div style="position:absolute;left:739px;top:755.82px;line-height:16.20px;font-size:13.5px;color:#232629;font-weight:normal;letter-spacing:0.72px;white-space:nowrap;">SAC factor</div>
<div style="position:absolute;left:917px;top:749px;width:172px;height:29px;box-sizing:border-box;border:1px solid #bcbec0;border-radius:3px;background:#fcfcfc;"></div>
<svg style="position:absolute;left:1073px;top:754px;" width="11" height="18" viewBox="0 0 11 18"><path d="M1 6.6 L5.5 2.2 L10 6.6 M1 11.5 L5.5 15.9 L10 11.5" fill="none" stroke="#31363b" stroke-width="1.3"/></svg>
<div style="position:absolute;left:924px;top:756.32px;line-height:16.20px;font-size:13.5px;color:#31363b;font-weight:normal;letter-spacing:0.72px;white-space:nowrap;">4.0</div>
<div style="position:absolute;left:739px;top:788.82px;line-height:16.20px;font-size:13.5px;color:#232629;font-weight:normal;letter-spacing:0.72px;white-space:nowrap;">Problem solving time</div>
<div style="position:absolute;left:917px;top:782px;width:172px;height:29px;box-sizing:border-box;border:1px solid #bcbec0;border-radius:3px;background:#fcfcfc;"></div>
<svg style="position:absolute;left:1073px;top:787px;" width="11" height="18" viewBox="0 0 11 18"><path d="M1 6.6 L5.5 2.2 L10 6.6 M1 11.5 L5.5 15.9 L10 11.5" fill="none" stroke="#31363b" stroke-width="1.3"/></svg>
<div style="position:absolute;left:924px;top:789.32px;line-height:16.20px;font-size:13.5px;color:#31363b;font-weight:normal;letter-spacing:0.72px;white-space:nowrap;">4min</div>
<div style="position:absolute;left:739px;top:821.82px;line-height:16.20px;font-size:13.5px;color:#232629;font-weight:normal;letter-spacing:0.72px;white-space:nowrap;">Bottom pO₂</div>
<div style="position:absolute;left:917px;top:815px;width:172px;height:29px;box-sizing:border-box;border:1px solid #bcbec0;border-radius:3px;background:#fcfcfc;"></div>
<svg style="position:absolute;left:1073px;top:820px;" width="11" height="18" viewBox="0 0 11 18"><path d="M1 6.6 L5.5 2.2 L10 6.6 M1 11.5 L5.5 15.9 L10 11.5" fill="none" stroke="#31363b" stroke-width="1.3"/></svg>
<div style="position:absolute;left:924px;top:822.32px;line-height:16.20px;font-size:13.5px;color:#31363b;font-weight:normal;letter-spacing:0.72px;white-space:nowrap;">1.40bar</div>
<div style="position:absolute;left:739px;top:854.82px;line-height:16.20px;font-size:13.5px;color:#232629;font-weight:normal;letter-spacing:0.72px;white-space:nowrap;">Deco pO₂</div>
<div style="position:absolute;left:917px;top:848px;width:172px;height:29px;box-sizing:border-box;border:1px solid #bcbec0;border-radius:3px;background:#fcfcfc;"></div>
<svg style="position:absolute;left:1073px;top:853px;" width="11" height="18" viewBox="0 0 11 18"><path d="M1 6.6 L5.5 2.2 L10 6.6 M1 11.5 L5.5 15.9 L10 11.5" fill="none" stroke="#31363b" stroke-width="1.3"/></svg>
<div style="position:absolute;left:924px;top:855.32px;line-height:16.20px;font-size:13.5px;color:#31363b;font-weight:normal;letter-spacing:0.72px;white-space:nowrap;">1.60bar</div>
<div style="position:absolute;left:739px;top:887.82px;line-height:16.20px;font-size:13.5px;color:#232629;font-weight:normal;letter-spacing:0.72px;white-space:nowrap;">Best mix END</div>
<div style="position:absolute;left:917px;top:881px;width:172px;height:29px;box-sizing:border-box;border:1px solid #bcbec0;border-radius:3px;background:#fcfcfc;"></div>
<svg style="position:absolute;left:1073px;top:886px;" width="11" height="18" viewBox="0 0 11 18"><path d="M1 6.6 L5.5 2.2 L10 6.6 M1 11.5 L5.5 15.9 L10 11.5" fill="none" stroke="#31363b" stroke-width="1.3"/></svg>
<div style="position:absolute;left:924px;top:888.32px;line-height:16.20px;font-size:13.5px;color:#31363b;font-weight:normal;letter-spacing:0.72px;white-space:nowrap;">98ft</div>
</div>
<div style="position:absolute;left:1102px;top:660px;width:3px;height:133px;background:#a9abad;border-radius:1.5px;"></div>
<div style="position:absolute;left:1125px;top:661.02px;line-height:16.20px;font-size:13.5px;color:#232629;font-weight:bold;letter-spacing:1.0px;white-space:nowrap;">Dive plan details</div>
<div style="position:absolute;left:1512px;top:654px;width:82px;height:31px;box-sizing:border-box;border:1px solid #bcbec0;border-radius:3px;background:linear-gradient(#fbfbfb,#eff0f1);box-shadow:0 1px 1px rgba(0,0,0,0.12);"></div>
<div style="position:absolute;left:1053px;width:1000px;text-align:center;top:662.02px;line-height:16.20px;font-size:13.5px;color:#232629;font-weight:normal;letter-spacing:0.72px;white-space:nowrap;">Print</div>
<div style="position:absolute;left:1126px;top:692px;width:468px;height:201px;box-sizing:border-box;border:1px solid #bcbec0;border-radius:2px;background:#fcfcfc;overflow:hidden;">
</div>
<div style="position:absolute;left:1581px;top:700px;width:3px;height:111px;background:#a9abad;border-radius:1.5px;"></div>
<div style="position:absolute;left:0;top:0;width:1600px;height:892px;overflow:hidden;">
<div style="position:absolute;left:1131px;top:698.02px;line-height:16.20px;font-size:13.5px;color:#232629;font-weight:normal;letter-spacing:0.72px;white-space:nowrap;"><b style="letter-spacing:1.0px">Subsurface (4.8.5.0) dive plan</b> created on 2/24/19</div>
<div style="position:absolute;left:1131px;top:713.02px;line-height:16.20px;font-size:13.5px;color:#232629;font-weight:normal;letter-spacing:0.72px;white-space:nowrap;">Runtime: 22min</div>
<div style="position:absolute;left:1156px;top:747.02px;line-height:16.20px;font-size:13.5px;color:#232629;font-weight:bold;letter-spacing:0.9px;white-space:nowrap;">depth</div>
<div style="position:absolute;left:1211px;top:747.02px;line-height:16.20px;font-size:13.5px;color:#232629;font-weight:bold;letter-spacing:0.9px;white-space:nowrap;">duration</div>
<div style="position:absolute;left:1285px;top:747.02px;line-height:16.20px;font-size:13.5px;color:#232629;font-weight:bold;letter-spacing:0.9px;white-space:nowrap;">runtime</div>
<div style="position:absolute;left:1368px;top:747.02px;line-height:16.20px;font-size:13.5px;color:#232629;font-weight:bold;letter-spacing:0.9px;white-space:nowrap;">gas</div>
<svg style="position:absolute;left:1143px;top:769px;" width="11" height="11" viewBox="0 0 11 11"><path d="M2.5 2.5 L8.5 8.5 M8.5 5 V8.5 H5" fill="none" stroke="#232629" stroke-width="1.15"/></svg>
<div style="position:absolute;left:1166px;top:766.02px;line-height:16.20px;font-size:13.5px;color:#232629;font-weight:normal;letter-spacing:0.72px;white-space:nowrap;">45ft</div>
<div style="position:absolute;left:1211px;top:766.02px;line-height:16.20px;font-size:13.5px;color:#232629;font-weight:normal;letter-spacing:0.72px;white-space:nowrap;">1min</div>
<div style="position:absolute;left:1285px;top:766.02px;line-height:16.20px;font-size:13.5px;color:#232629;font-weight:normal;letter-spacing:0.72px;white-space:nowrap;">1min</div>
<div style="position:absolute;left:1355px;top:766.02px;line-height:16.20px;font-size:13.5px;color:#ee0000;font-weight:bold;letter-spacing:1.0px;white-space:nowrap;">EAN30</div>
<svg style="position:absolute;left:1143px;top:788px;" width="11" height="11" viewBox="0 0 11 11"><path d="M1.5 5.5 H9.5 M7 3 L9.5 5.5 L7 8" fill="none" stroke="#232629" stroke-width="1.15"/></svg>
<div style="position:absolute;left:1166px;top:785.02px;line-height:16.20px;font-size:13.5px;color:#232629;font-weight:normal;letter-spacing:0.72px;white-space:nowrap;">45ft</div>
<div style="position:absolute;left:1211px;top:785.02px;line-height:16.20px;font-size:13.5px;color:#232629;font-weight:normal;letter-spacing:0.72px;white-space:nowrap;">19min</div>
<div style="position:absolute;left:1285px;top:785.02px;line-height:16.20px;font-size:13.5px;color:#232629;font-weight:normal;letter-spacing:0.72px;white-space:nowrap;">20min</div>
<svg style="position:absolute;left:1143px;top:807px;" width="11" height="11" viewBox="0 0 11 11"><path d="M2.5 8.5 L8.5 2.5 M5 2.5 H8.5 V6" fill="none" stroke="#232629" stroke-width="1.15"/></svg>
<div style="position:absolute;left:1166px;top:804.02px;line-height:16.20px;font-size:13.5px;color:#232629;font-weight:normal;letter-spacing:0.72px;white-space:nowrap;">0ft</div>
<div style="position:absolute;left:1211px;top:804.02px;line-height:16.20px;font-size:13.5px;color:#232629;font-weight:normal;letter-spacing:0.72px;white-space:nowrap;">2min</div>
<div style="position:absolute;left:1285px;top:804.02px;line-height:16.20px;font-size:13.5px;color:#232629;font-weight:normal;letter-spacing:0.72px;white-space:nowrap;">22min</div>
<div style="position:absolute;left:1131px;top:838.02px;line-height:16.20px;font-size:13.5px;color:#232629;font-weight:normal;letter-spacing:0.72px;white-space:nowrap;">CNS: 4%</div>
<div style="position:absolute;left:1131px;top:853.02px;line-height:16.20px;font-size:13.5px;color:#232629;font-weight:normal;letter-spacing:0.72px;white-space:nowrap;">OTU: 11</div>
<div style="position:absolute;left:1131px;top:886.02px;line-height:16.20px;font-size:13.5px;color:#232629;font-weight:normal;letter-spacing:0.72px;white-space:nowrap;">Deco model: Bühlmann ZHL-16C with GFLow = 30% and GFHigh =</div>
</div>
</div></body></html>
